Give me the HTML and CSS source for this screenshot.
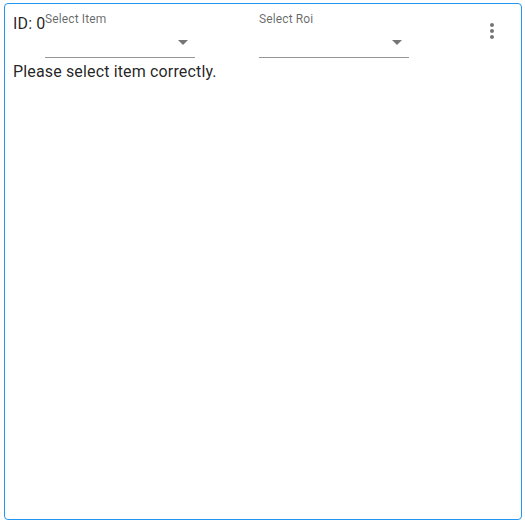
FILE: index.html
```html
<!DOCTYPE html>
<html>
<head>
<meta charset="utf-8">
<link rel="stylesheet" href="styles.css">
</head>
<body>
<div class="card">
  <div class="header">
    <span class="id">ID: 0</span>
    <div class="field">
      <label class="label">Select Item</label>
      <div class="select">
        <svg class="arrow" viewBox="0 0 24 24" width="24" height="24"><path d="M7 10l5 5 5-5z"/></svg>
      </div>
    </div>
    <div class="field second">
      <label class="label">Select Roi</label>
      <div class="select">
        <svg class="arrow" viewBox="0 0 24 24" width="24" height="24"><path d="M7 10l5 5 5-5z"/></svg>
      </div>
    </div>
    <div class="menu">
      <svg viewBox="0 0 24 24" width="24" height="24"><path d="M12 8c1.1 0 2-.9 2-2s-.9-2-2-2-2 .9-2 2 .9 2 2 2zm0 2c-1.1 0-2 .9-2 2s.9 2 2 2 2-.9 2-2-.9-2-2-2zm0 6c-1.1 0-2 .9-2 2s.9 2 2 2 2-.9 2-2-.9-2-2-2z"/></svg>
    </div>
  </div>
  <p class="message">Please select item correctly.</p>
</div>
</body>
</html>
```
FILE: styles.css
```css
html, body {
  margin: 0;
  padding: 0;
  background: #fff;
}
body {
  font-family: Roboto, "Noto Sans", sans-serif;
  color: rgba(0, 0, 0, 0.87);
}
.card {
  box-sizing: border-box;
  width: 518px;
  height: 517px;
  margin: 3px 0 0 4px;
  border: 1px solid #2196f3;
  border-radius: 4px;
  padding: 8px 8px 0 8px;
}
.header {
  display: flex;
  align-items: flex-start;
}
.id {
  font-size: 16px;
  line-height: 24px;
  letter-spacing: 0.00938em;
  width: 32px;
  white-space: nowrap;
}
.field {
  width: 150px;
  display: flex;
  flex-direction: column;
}
.field.second {
  margin-left: 64px;
}
.label {
  font-size: 12px;
  line-height: 14px;
  color: rgba(0, 0, 0, 0.6);
  letter-spacing: 0.01em;
}
.select {
  position: relative;
  height: 31px;
  border-bottom: 1px solid rgba(0, 0, 0, 0.42);
}
.arrow {
  position: absolute;
  right: 0;
  top: 4px;
  fill: rgba(0, 0, 0, 0.54);
}
.menu {
  margin-left: auto;
  margin-top: 7px;
  margin-right: 9px;
  width: 24px;
  height: 24px;
}
.menu svg {
  display: block;
  fill: rgba(0, 0, 0, 0.54);
}
.message {
  margin: 2px 0 0 0;
  font-size: 16px;
  line-height: 24px;
  letter-spacing: 0.00938em;
}
```
